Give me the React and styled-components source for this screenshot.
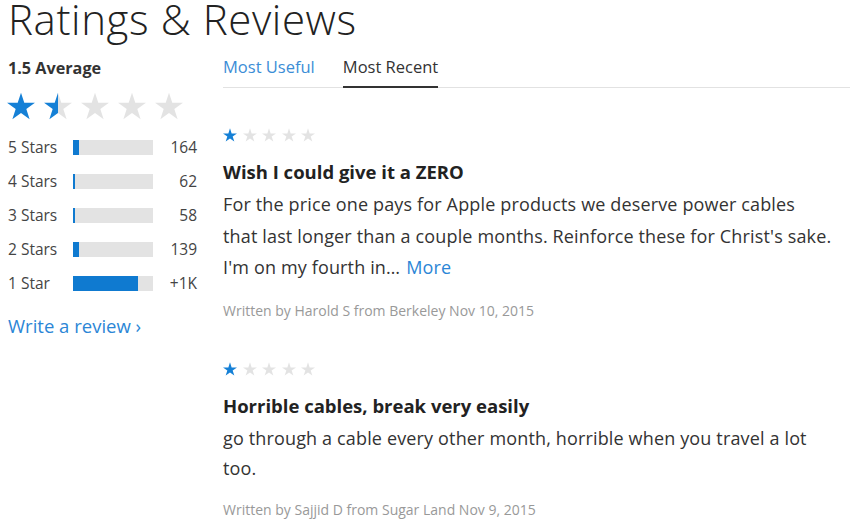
import React from "react";
import styled, { createGlobalStyle } from "styled-components";

const GlobalStyle = createGlobalStyle`
  html, body { margin: 0; padding: 0; background: #fff; }
  body { font-family: "Open Sans", "Noto Sans", sans-serif; color: #333; }
`;

const Page = styled.div`
  width: 850px;
  height: 523px;
  overflow: hidden;
  padding-left: 8px;
  box-sizing: border-box;
`;

const Heading = styled.h1`
  margin: 0;
  font-weight: 300;
  font-size: 42px;
  line-height: 34px;
  height: 34px;
  padding-top: 2px;
  color: #222;
  letter-spacing: 0.6px;
  white-space: nowrap;
`;

const Columns = styled.div`
  display: grid;
  grid-template-columns: 215px 1fr;
  margin-top: 14px;
`;

const Side = styled.div`
  display: flex;
  flex-direction: column;
`;

const Average = styled.div`
  font-weight: 700;
  font-size: 16.2px;
  line-height: 36px;
  color: #333;
`;

const BigStars = styled.div`
  display: flex;
  gap: 5px;
  margin-top: 4px;
  margin-left: -3px;
`;

const Histogram = styled.div`
  display: flex;
  flex-direction: column;
  margin-top: 8px;
`;

const HistRow = styled.div`
  display: grid;
  grid-template-columns: 65px 80px 44px;
  align-items: center;
  height: 34px;
  font-size: 15.5px;
  color: #444;
`;

const Bar = styled.div`
  height: 15px;
  background: #e3e3e3;
  overflow: hidden;
`;

const BarFill = styled.div`
  height: 100%;
  background: #0f7ad0;
`;

const Count = styled.span`
  text-align: right;
`;

const WriteLink = styled.a`
  color: #2b86d6;
  font-size: 18.5px;
  text-decoration: none;
  margin-top: 9px;
  line-height: 34px;
`;

const Main = styled.div`
  display: flex;
  flex-direction: column;
`;

const Tabs = styled.div`
  display: flex;
  gap: 28px;
  border-bottom: 1px solid #e2e2e2;
`;

const Tab = styled.div`
  font-size: 16.5px;
  line-height: 34px;
  padding-bottom: 2px;
  color: ${(p) => (p.$active ? "#333" : "#3b8dd6")};
  border-bottom: 2px solid ${(p) => (p.$active ? "#333" : "transparent")};
  margin-bottom: -1px;
`;

const Review = styled.div`
  display: flex;
  flex-direction: column;
  padding-top: ${(p) => p.$top}px;
`;

const SmallStars = styled.div`
  display: flex;
  gap: 3.5px;
  height: 16px;
  align-items: center;
  margin-left: -1px;
`;

const ReviewTitle = styled.div`
  font-weight: 700;
  font-size: 18.5px;
  line-height: 24px;
  margin-top: 17px;
  color: #222;
`;

const ReviewBody = styled.p`
  margin: 5px 0 0;
  font-size: 18px;
  letter-spacing: 0.15px;
  line-height: ${(p) => p.$lh}px;
  color: #333;
  white-space: nowrap;
`;

const Line = styled.span`
  display: block;
`;

const More = styled.a`
  color: #2b86d6;
  text-decoration: none;
  margin-left: 6px;
`;

const Meta = styled.div`
  font-size: 14px;
  color: #999;
  margin-top: 17px;
  line-height: 20px;
`;

let gid = 0;
function Star({ size, fill = 0 }) {
  const id = React.useMemo(() => `sg${gid++}`, []);
  const pts =
    "12,1 14.47,8.6 22.46,8.6 16,13.3 18.47,20.9 12,16.2 5.53,20.9 8,13.3 1.54,8.6 9.53,8.6";
  return (
    <svg width={size} height={size} viewBox="0 0 24 22">
      <defs>
        <linearGradient id={id} x1="0" x2="1" y1="0" y2="0">
          <stop offset={fill} stopColor="#1580d6" />
          <stop offset={fill} stopColor="#e3e3e3" />
        </linearGradient>
      </defs>
      <polygon points={pts} fill={`url(#${id})`} />
    </svg>
  );
}

function StarRow({ Wrap, size, rating }) {
  return (
    <Wrap>
      {[0, 1, 2, 3, 4].map((i) => (
        <Star key={i} size={size} fill={Math.max(0, Math.min(1, rating - i))} />
      ))}
    </Wrap>
  );
}

const hist = [
  { label: "5 Stars", pct: 8, count: "164" },
  { label: "4 Stars", pct: 3, count: "62" },
  { label: "3 Stars", pct: 3, count: "58" },
  { label: "2 Stars", pct: 7, count: "139" },
  { label: "1 Star", pct: 81, count: "+1K" },
];

const reviews = [
  {
    title: "Wish I could give it a ZERO",
    lines: [
      "For the price one pays for Apple products we deserve power cables",
      "that last longer than a couple months. Reinforce these for Christ's sake.",
      "I'm on my fourth in…",
    ],
    more: true,
    lh: 31.5,
    top: 39,
    meta: "Written by Harold S from Berkeley Nov 10, 2015",
  },
  {
    title: "Horrible cables, break very easily",
    lines: [
      "go through a cable every other month, horrible when you travel a lot",
      "too.",
    ],
    more: false,
    lh: 30,
    top: 40,
    meta: "Written by Sajjid D from Sugar Land Nov 9, 2015",
  },
];

export default function App() {
  return (
    <Page>
      <GlobalStyle />
      <Heading>Ratings &amp; Reviews</Heading>
      <Columns>
        <Side>
          <Average>1.5 Average</Average>
          <StarRow Wrap={BigStars} size={32} rating={1.5} />
          <Histogram>
            {hist.map((h) => (
              <HistRow key={h.label}>
                <span>{h.label}</span>
                <Bar>
                  <BarFill style={{ width: `${h.pct}%` }} />
                </Bar>
                <Count>{h.count}</Count>
              </HistRow>
            ))}
          </Histogram>
          <WriteLink href="#">Write a review ›</WriteLink>
        </Side>
        <Main>
          <Tabs>
            <Tab>Most Useful</Tab>
            <Tab $active>Most Recent</Tab>
          </Tabs>
          {reviews.map((r) => (
            <Review key={r.title} $top={r.top}>
              <StarRow Wrap={SmallStars} size={16} rating={1} />
              <ReviewTitle>{r.title}</ReviewTitle>
              <ReviewBody $lh={r.lh}>
                {r.lines.map((l, i) => (
                  <Line key={i}>
                    {l}
                    {r.more && i === r.lines.length - 1 && <More href="#">More</More>}
                  </Line>
                ))}
              </ReviewBody>
              <Meta>{r.meta}</Meta>
            </Review>
          ))}
        </Main>
      </Columns>
    </Page>
  );
}
